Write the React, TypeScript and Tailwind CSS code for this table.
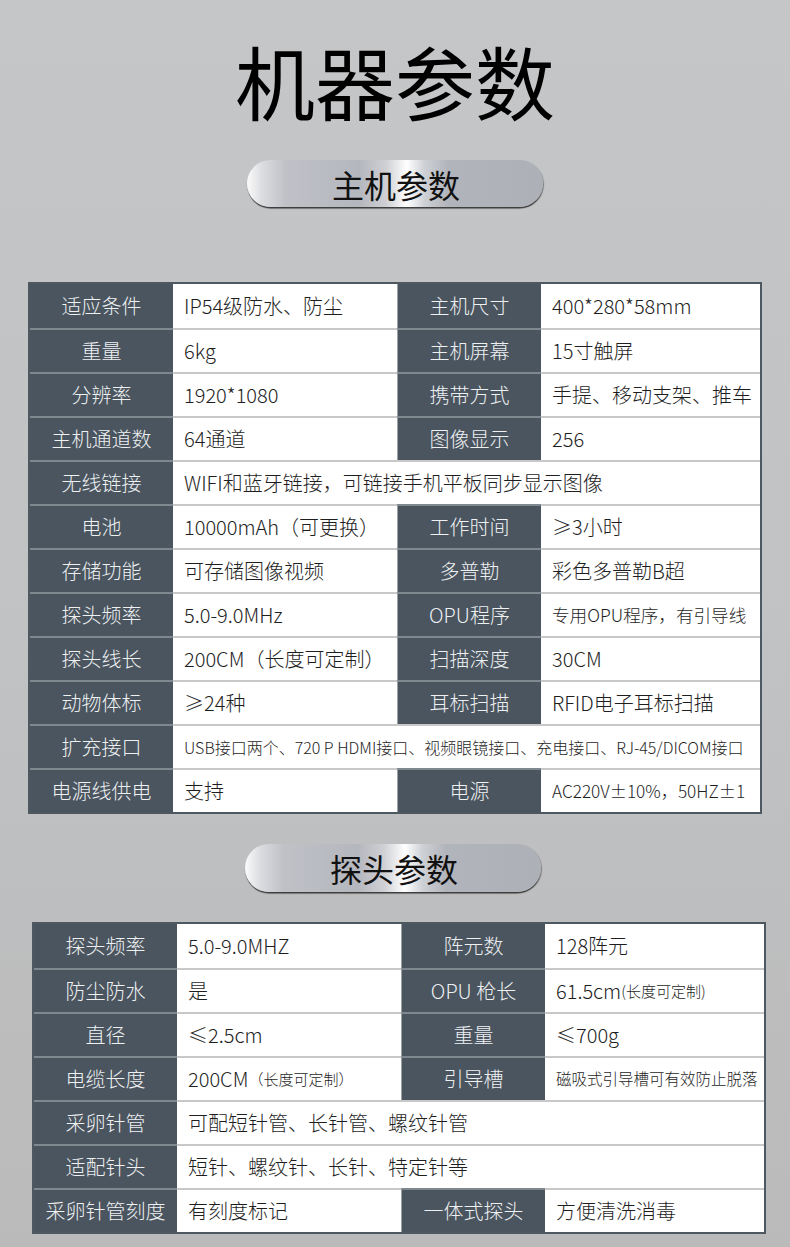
import React from 'react';

type Cell = { text: React.ReactNode; small?: string };
type Row = { a: string; b: Cell; c?: string; d?: Cell };

const hostRows: Row[] = [
  { a: '适应条件', b: { text: 'IP54级防水、防尘' }, c: '主机尺寸', d: { text: '400*280*58mm' } },
  { a: '重量', b: { text: '6kg' }, c: '主机屏幕', d: { text: '15寸触屏' } },
  { a: '分辨率', b: { text: '1920*1080' }, c: '携带方式', d: { text: '手提、移动支架、推车' } },
  { a: '主机通道数', b: { text: '64通道' }, c: '图像显示', d: { text: '256' } },
  { a: '无线链接', b: { text: 'WIFI和蓝牙链接，可链接手机平板同步显示图像' } },
  { a: '电池', b: { text: '10000mAh（可更换）' }, c: '工作时间', d: { text: '≥3小时' } },
  { a: '存储功能', b: { text: '可存储图像视频' }, c: '多普勒', d: { text: '彩色多普勒B超' } },
  { a: '探头频率', b: { text: '5.0-9.0MHz' }, c: 'OPU程序', d: { text: '专用OPU程序，有引导线', small: 'text-[17.6px]' } },
  { a: '探头线长', b: { text: '200CM（长度可定制）' }, c: '扫描深度', d: { text: '30CM' } },
  { a: '动物体标', b: { text: '≥24种' }, c: '耳标扫描', d: { text: 'RFID电子耳标扫描' } },
  {
    a: '扩充接口',
    b: { text: 'USB接口两个、720 P HDMI接口、视频眼镜接口、充电接口、RJ-45/DICOM接口', small: 'text-[16px]' },
  },
  { a: '电源线供电', b: { text: '支持' }, c: '电源', d: { text: 'AC220V±10%，50HZ±1', small: 'text-[17.2px]' } },
];

const probeRows: Row[] = [
  { a: '探头频率', b: { text: '5.0-9.0MHZ' }, c: '阵元数', d: { text: '128阵元' } },
  {
    a: '防尘防水',
    b: { text: '是' },
    c: 'OPU 枪长',
    d: {
      text: (
        <>
          61.5cm<span className="text-[15px]">(长度可定制)</span>
        </>
      ),
    },
  },
  { a: '直径', b: { text: '≤2.5cm' }, c: '重量', d: { text: '≤700g' } },
  {
    a: '电缆长度',
    b: {
      text: (
        <>
          200CM<span className="text-[15px]">（长度可定制）</span>
        </>
      ),
    },
    c: '引导槽',
    d: { text: '磁吸式引导槽可有效防止脱落', small: 'text-[15.5px]' },
  },
  { a: '采卵针管', b: { text: '可配短针管、长针管、螺纹针管' } },
  { a: '适配针头', b: { text: '短针、螺纹针、长针、特定针等' } },
  { a: '采卵针管刻度', b: { text: '有刻度标记' }, c: '一体式探头', d: { text: '方便清洗消毒' } },
];

const Label = ({ text, first, sep }: { text: string; first: boolean; sep?: boolean }) => (
  <div
    className={`flex items-center justify-center bg-[#4a555f] text-[20px] font-light text-[#eef0f2] ${
      first ? '' : 'border-t-2 border-[#7f888f]'
    } ${sep ? 'border-l border-l-[#9ea3a8]' : ''}`}
  >
    {text}
  </div>
);

const Value = ({ cell, first, span }: { cell: Cell; first: boolean; span?: boolean }) => (
  <div
    className={`flex items-center whitespace-nowrap bg-white pl-[11px] font-light text-[#1e1e1e] ${
      cell.small ?? 'text-[20px]'
    } ${first ? '' : 'border-t-2 border-[#c8c8c8]'} ${span ? 'col-span-3' : ''}`}
  >
    {cell.text}
  </div>
);

const ParamTable = ({ rows, className }: { rows: Row[]; className: string }) => (
  <div className={`w-[734px] border-2 border-[#4e5861] ${className}`}>
    <div className="grid grid-cols-[143px_224px_144px_219px] auto-rows-[44px]">
      {rows.map((r, i) => (
        <React.Fragment key={i}>
          <Label text={r.a} first={i === 0} />
          {r.c ? (
            <>
              <Value cell={r.b} first={i === 0} />
              <Label text={r.c} first={i === 0} sep />
              <Value cell={r.d!} first={i === 0} />
            </>
          ) : (
            <Value cell={r.b} first={i === 0} span />
          )}
        </React.Fragment>
      ))}
    </div>
  </div>
);

const Pill = ({ text, className }: { text: string; className: string }) => (
  <div
    className={`flex w-[296px] items-center justify-center rounded-full bg-[linear-gradient(90deg,#fbfbfb_0%,#dcdde0_5%,#bfc1c7_13%,#b5b7be_38%,#cfd0d4_47%,#ffffff_54%,#cdd0d4_60%,#b2b4bb_68%,#aeb0b7_100%)] pl-[2px] text-[32px] text-[#111] shadow-[0_2px_1px_-0.5px_rgba(45,45,45,0.85),1px_1px_1px_rgba(70,70,70,0.5)] ${className}`}
  >
    {text}
  </div>
);

export default function App() {
  return (
    <div className="min-h-[1247px] w-[790px] bg-[linear-gradient(180deg,#c5c6c8_0%,#c1c2c4_50%,#bababa_100%)] font-['Noto_Sans_CJK_SC',sans-serif]">
      <h1 className="pt-[39px] text-center text-[80px] leading-[80px] font-normal text-black">机器参数</h1>
      <Pill text="主机参数" className="ml-[247px] mt-[41px] h-[47px]" />
      <ParamTable rows={hostRows} className="ml-[28px] mt-[75px]" />
      <Pill text="探头参数" className="ml-[245px] mt-[30px] h-[48px]" />
      <ParamTable rows={probeRows} className="ml-[32px] mt-[30px]" />
    </div>
  );
}
